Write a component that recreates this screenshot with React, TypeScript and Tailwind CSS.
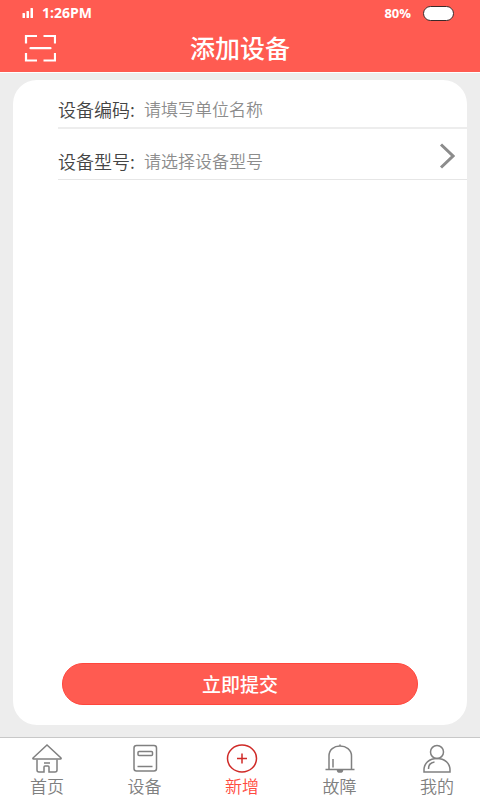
import { useState } from "react";
import type { ReactNode } from "react";

const tabs: { name: string; icon: ReactNode }[] = [
  {
    name: "首页",
    icon: (
      <>
        <path d="M2 15 16 2l14 13q.500 1-.500 1h-27q-1 0-.500-1z" />
        <path d="M6 16.500V27q0 2 2 2h5v-5q0-1 1-1h3q1 0 1 1v5h6q2 0 2-2V16.500M13 20h6" />
      </>
    ),
  },
  {
    name: "设备",
    icon: (
      <>
        <rect x="5" y="2.500" width="22.500" height="25.500" rx="2.500" />
        <rect x="9" y="8.500" width="14.500" height="4" rx="1" />
        <path d="M8.500 23.500h15" />
      </>
    ),
  },
  {
    name: "新增",
    icon: (
      <>
        <ellipse cx="16" cy="15.500" rx="14.500" ry="13.500" />
        <path d="M11 15.500h10M16 10.500v10" />
      </>
    ),
  },
  {
    name: "故障",
    icon: (
      <>
        <path d="M1.500 26.500h29M5 26.500V13C5 6.500 10 3 16 3s11.500 3.500 11.500 10v13.500M16 1.500V3M9 16v8.500" />
        <path d="M13.500 27.200a2.500 1.800 0 0 0 5 0z" fill="currentColor" />
      </>
    ),
  },
  {
    name: "我的",
    icon: (
      <>
        <circle cx="16" cy="9" r="6.500" />
        <path d="M3 29v-2c0-7 5.500-11.500 13-11.500S29 20 29 27v2z" />
        <path d="M7.500 26c0-4 2-6.500 6-7" />
      </>
    ),
  },
];

function StatusBar() {
  return (
    <div className="flex h-6 items-center pr-[26px] pl-[22px] pt-[2px] font-['Open_Sans',sans-serif] text-sm leading-4 font-bold">
      <svg viewBox="0 0 12 10" className="mr-2 h-[10px] w-3" fill="currentColor" aria-hidden="true">
        <rect x="0.500" y="5" width="2.500" height="5" rx="0.500" />
        <rect x="4.500" y="3" width="2.500" height="7" rx="0.500" />
        <rect x="8.500" y="0" width="2.500" height="10" rx="0.500" />
      </svg>
      <span>1:26PM</span>
      <span className="ml-auto text-[13px] leading-4">80%</span>
      <span className="ml-3 h-[15px] w-[31px] rounded-full border border-[#3a2a2a] bg-white" />
    </div>
  );
}

export default function App() {
  const [active, setActive] = useState("新增");
  const [model, setModel] = useState("");

  return (
    <div className="flex min-h-screen flex-col bg-[#ededed] font-['Noto_Sans_CJK_SC',sans-serif]">
      <header className="border-b border-white bg-[#ff5b51] text-white">
        <StatusBar />
        <div className="grid h-12 grid-cols-[1fr_auto_1fr] items-center px-6">
          <button type="button" aria-label="扫一扫" className="w-8">
            <svg viewBox="0 0 32 28" className="h-7 w-8" fill="none" stroke="currentColor" strokeWidth="2.200">
              <path d="M2 9.500V2h11M19.500 2H31v7.500M2 19v7.500h11M19.500 26.500H31V19" />
              <path d="M6.500 14.200h20" strokeLinecap="round" />
            </svg>
          </button>
          <h1 className="pb-[2px] text-[25px] leading-8 font-medium">添加设备</h1>
        </div>
      </header>

      <main className="flex grow px-[13px] pt-[7px] pb-3">
        <form
          className="flex grow flex-col overflow-hidden rounded-[24px] bg-white pb-5"
          onSubmit={(e) => e.preventDefault()}
        >
          <div className="ml-[45px] flex h-[49px] items-center border-b-2 border-[#ededed] pt-[11px]">
            <label htmlFor="code" className="w-[86px] shrink-0 text-lg leading-6 font-[350] text-[#444]">
              设备编码:
            </label>
            <input
              id="code"
              placeholder="请填写单位名称"
              className="min-w-0 grow text-[17px] leading-6 font-[350] text-[#444] outline-none placeholder:text-[#8c8c8c]"
            />
          </div>
          <div className="relative ml-[45px] flex h-[51px] items-center border-b border-[#e6e6e6] pt-[13px]">
            <label htmlFor="model" className="w-[86px] shrink-0 text-lg leading-6 font-[350] text-[#444]">
              设备型号:
            </label>
            <select
              id="model"
              value={model}
              onChange={(e) => setModel(e.target.value)}
              className="min-w-0 grow appearance-none bg-transparent text-[17px] leading-6 font-[350] text-[#8c8c8c] outline-none"
            >
              <option value="">请选择设备型号</option>
            </select>
            <svg
              viewBox="0 0 16 26"
              className="pointer-events-none absolute top-[14px] right-3 h-[26px] w-4"
              fill="none"
              stroke="#8c8c8c"
              strokeWidth="3"
              aria-hidden="true"
            >
              <path d="m2 1.500 12 11.500L2 24.500" />
            </svg>
          </div>

          <button
            type="submit"
            className="mt-auto mr-[49px] ml-[49px] h-[42px] rounded-full border border-[#ff463c] bg-[#ff5b51] text-[19px] leading-6 font-medium text-white"
          >
            立即提交
          </button>
        </form>
      </main>

      <nav className="flex h-[63px] justify-between border-t border-[#c8c8c8] bg-white pr-[26px] pl-[30px]">
        {tabs.map((tab) => (
          <button
            key={tab.name}
            type="button"
            onClick={() => setActive(tab.name)}
            className={
              tab.name === active
                ? "flex flex-col items-center pt-[5px] text-[#ff4a40]"
                : "flex flex-col items-center pt-[5px] text-[#808080]"
            }
          >
            <svg
              viewBox="0 0 32 31"
              className={tab.name === active ? "h-[31px] w-8 text-[#cf2a27]" : "h-[31px] w-8"}
              fill="none"
              stroke="currentColor"
              strokeWidth="1.500"
              aria-hidden="true"
            >
              {tab.icon}
            </svg>
            <span className="text-[17px] leading-6 font-[350]">{tab.name}</span>
          </button>
        ))}
      </nav>
    </div>
  );
}
